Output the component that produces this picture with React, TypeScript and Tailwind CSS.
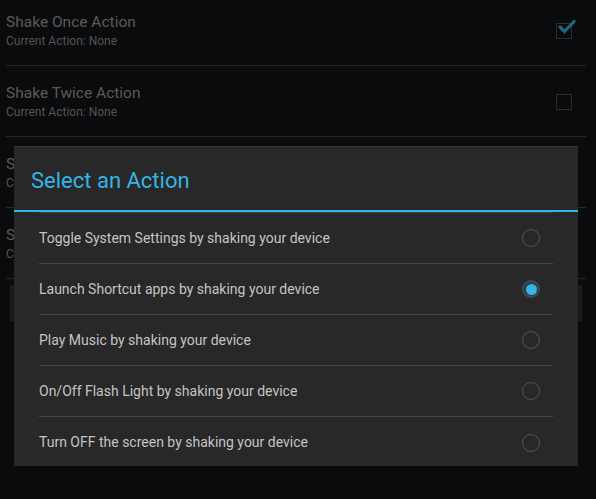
import { useState } from 'react'

const settings = [
  { title: 'Shake Once Action', sub: 'Current Action: None', checked: true },
  { title: 'Shake Twice Action', sub: 'Current Action: None', checked: false },
  { title: 'Shake Thrice Action', sub: 'Current Action: None', checked: false },
  { title: 'Shake Four Times Action', sub: 'Current Action: None', checked: false },
]

const actions = [
  'Toggle System Settings by shaking your device',
  'Launch Shortcut apps by shaking your device',
  'Play Music by shaking your device',
  'On/Off Flash Light by shaking your device',
  'Turn OFF the screen by shaking your device',
]

function Checkbox({ checked }: { checked: boolean }) {
  return (
    <div className="relative w-[16px] h-[16px] border border-[#2c2c2c]">
      {checked && (
        <svg className="absolute -top-[5px] left-[1px]" width="18" height="16" viewBox="0 0 18 16">
          <path d="M2 8 L6.5 12.5 L16 2.5" fill="none" stroke="#1f6784" strokeWidth="3.2" strokeLinecap="round" />
        </svg>
      )}
    </div>
  )
}

function Radio({ on }: { on: boolean }) {
  if (on) {
    return (
      <div className="w-[18px] h-[18px] rounded-full border-2 border-[#3c4c57] bg-[#2f3a41] flex items-center justify-center">
        <div className="w-[11px] h-[11px] rounded-full bg-[#33b5e5]" />
      </div>
    )
  }
  return <div className="w-[18px] h-[18px] rounded-full border-[1.5px] border-[#555555]" />
}

export default function App() {
  const [selected, setSelected] = useState(1)

  return (
    <div className="relative w-[596px] h-[499px] bg-[#0a0b0c] overflow-hidden font-['Roboto',sans-serif]">
      <div className="-mt-[5px] px-[6px] pr-[10px]">
        {settings.map((s) => (
          <div key={s.title} className="h-[71px] flex justify-between border-b border-[#262626]">
            <div className="pt-[17px]">
              <div className="text-[15.5px] leading-[20px] text-[#5a5a5a]">{s.title}</div>
              <div className="text-[12px] leading-[18px] text-[#555555]">{s.sub}</div>
            </div>
            <div className="mr-[14px] pt-[28px]">
              <Checkbox checked={s.checked} />
            </div>
          </div>
        ))}
        <div className="mt-[6px] mx-[4px] h-[36px] bg-[#1a1a1b]" />
      </div>

      {/* dialog */}
      <div className="absolute left-[14px] top-[146px] w-[564px] h-[320px] bg-[#282828] border-t border-[#333333]">
        <div className="h-[63px] flex items-center pl-[17px] pt-[4px] text-[22px] text-[#33b5e5]">
          Select an Action
        </div>
        <div className="h-[2px] bg-[#33b5e5]" />
        <div className="px-[25px]">
          <div className="h-px bg-[#444444]" />
          {actions.map((a, i) => (
            <div
              key={a}
              onClick={() => setSelected(i)}
              className={`h-[51px] flex items-center justify-between pr-[13px] ${i < actions.length - 1 ? 'border-b border-[#474747]' : ''}`}
            >
              <span className="text-[14px] text-[#c4c4c4]">{a}</span>
              <Radio on={selected === i} />
            </div>
          ))}
        </div>
      </div>
    </div>
  )
}
